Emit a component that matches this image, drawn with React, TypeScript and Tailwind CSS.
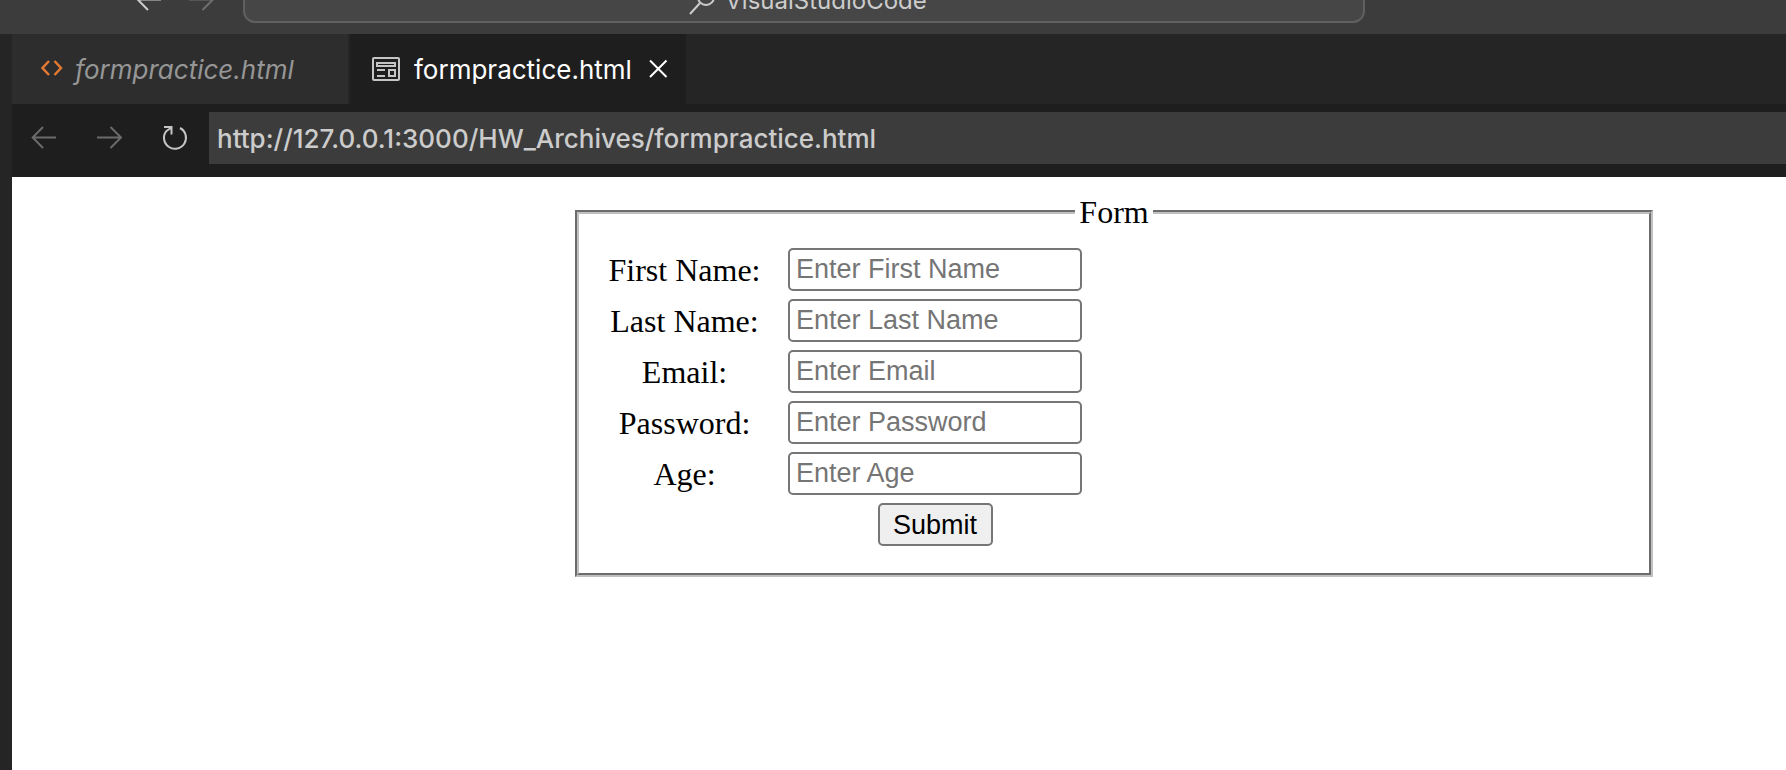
import type { ReactNode } from "react";

function Icon({ children, className }: { children: ReactNode; className?: string }) {
  return (
    <svg
      viewBox="0 0 32 32"
      width="32"
      height="32"
      fill="none"
      stroke="currentColor"
      strokeWidth="2"
      aria-hidden="true"
      className={`shrink-0 ${className ?? ""}`}
    >
      {children}
    </svg>
  );
}

const ArrowLeft = () => (
  <Icon>
    <path d="M28 15.500H5M15 5L4.700 15.500L15 26" />
  </Icon>
);

const ArrowRight = () => (
  <Icon>
    <path d="M4 15.500H27.500M17.500 5L28 15.500L17.500 26" />
  </Icon>
);

const fields = [
  { id: "first-name", label: "First Name:", placeholder: "Enter First Name", type: "text" },
  { id: "last-name", label: "Last Name:", placeholder: "Enter Last Name", type: "text" },
  { id: "email", label: "Email:", placeholder: "Enter Email", type: "email" },
  { id: "password", label: "Password:", placeholder: "Enter Password", type: "password" },
  { id: "age", label: "Age:", placeholder: "Enter Age", type: "number" },
];

function TitleBar() {
  return (
    <header className="flex h-[34px] items-end overflow-hidden bg-[#3c3c3c] pl-[133px]">
      <div className="flex h-[50px] gap-[20px]">
        <button type="button" aria-label="Go back" className="h-8 text-[#cccccc]">
          <ArrowLeft />
        </button>
        <button type="button" aria-label="Go forward" className="h-8 text-[#6f6f6f]">
          <ArrowRight />
        </button>
      </div>
      <button
        type="button"
        className="mb-[11px] ml-[26px] flex h-[44px] w-full max-w-[1122px] items-center justify-center gap-2 rounded-xl border-2 border-[#606060] bg-[#464646] pl-1 text-[24px] leading-[32px] text-[#cccccc]"
      >
        <Icon>
          <circle cx="21" cy="12" r="8" />
          <path d="M15 18L5 29" />
        </Icon>
        VisualStudioCode
      </button>
    </header>
  );
}

function Tabs() {
  return (
    <nav className="flex h-[70px] gap-[2px] bg-[#252526] text-[26px] leading-[32px]">
      <a href="#source" className="flex w-[336px] items-center gap-2 bg-[#2d2d2d] pl-[23px] text-[#969696] italic">
        <Icon className="text-[#e37933]">
          <path d="M14 8L7.500 15L14 22M19.500 8L26 15L19.500 22" strokeWidth="2.500" />
        </Icon>
        <span className="pt-[2px]">formpractice.html</span>
      </a>
      <div className="flex w-[336px] items-center bg-[#1e1e1e] pl-5 text-white">
        <a href="#preview" className="flex items-center gap-[12px]">
          <Icon className="text-[#c5c5c5]">
            <rect x="3" y="5" width="26" height="22" rx="1" />
            <path d="M7 10H25V13H7ZM7 17H15M7 23H15M19 17H25V23H19Z" />
          </Icon>
          <span className="pt-[2px]">formpractice.html</span>
        </a>
        <button type="button" aria-label="Close tab" className="ml-[10px]">
          <Icon>
            <path d="M8 7.500L24.500 24M24.500 7.500L8 24" />
          </Icon>
        </button>
      </div>
    </nav>
  );
}

function AddressBar() {
  return (
    <div className="flex items-center bg-[#1e1e1e] pt-2 pb-[13px] pl-4">
      <div className="flex gap-[33px]">
        <button type="button" aria-label="Back" className="text-[#6b6b6b]">
          <ArrowLeft />
        </button>
        <button type="button" aria-label="Forward" className="text-[#6b6b6b]">
          <ArrowRight />
        </button>
        <button type="button" aria-label="Reload" className="text-[#c5c5c5]">
          <Icon>
            <path d="M6 5H13.500V12.500M8.500 9L13.500 5.500M8.500 8.800A11 11 0 1 0 22 6" strokeWidth="2" />
          </Icon>
        </button>
      </div>
      <input
        aria-label="Address"
        type="text"
        defaultValue="http://127.0.0.1:3000/HW_Archives/formpractice.html"
        className="ml-[19px] h-[52px] min-w-0 flex-1 bg-[#3c3c3c] px-2 text-[26px] font-[450] text-[#cccccc] outline-none"
      />
    </div>
  );
}

function FormPage() {
  return (
    <main className="flex-1 bg-white pt-[17px] pr-[133px] pl-[563px] font-['Liberation_Serif',serif] text-[32px] leading-[36px] text-black">
      <form onSubmit={(e) => e.preventDefault()}>
        <fieldset className="border-4 border-[#c0c0c0] px-[30px] pt-[18px] pb-[27px] [border-style:groove]">
          <legend className="mx-auto px-1">Form</legend>
          <div className="grid grid-cols-[151px_294px] gap-x-7 gap-y-2">
            {fields.map((f) => (
              <div key={f.id} className="contents">
                <label htmlFor={f.id} className="flex items-center justify-center whitespace-nowrap">
                  {f.label}
                </label>
                <input
                  id={f.id}
                  type={f.type}
                  placeholder={f.placeholder}
                  className="h-[43px] rounded-[5px] border-2 border-[#767676] bg-white px-[6px] font-['Liberation_Sans',sans-serif] text-[27px] leading-[32px] placeholder:text-[#757575]"
                />
              </div>
            ))}
            <button
              type="submit"
              className="col-start-2 h-[43px] w-[115px] justify-self-center rounded-[5px] border-2 border-[#767676] bg-[#efefef] font-['Liberation_Sans',sans-serif] text-[27px] leading-[32px]"
            >
              Submit
            </button>
          </div>
        </fieldset>
      </form>
    </main>
  );
}

export default function App() {
  return (
    <div className="flex min-h-screen flex-col font-['Inter',sans-serif]">
      <TitleBar />
      <div className="flex flex-1 bg-[#252526] pl-3">
        <div className="flex min-w-0 flex-1 flex-col">
          <Tabs />
          <AddressBar />
          <FormPage />
        </div>
      </div>
    </div>
  );
}
